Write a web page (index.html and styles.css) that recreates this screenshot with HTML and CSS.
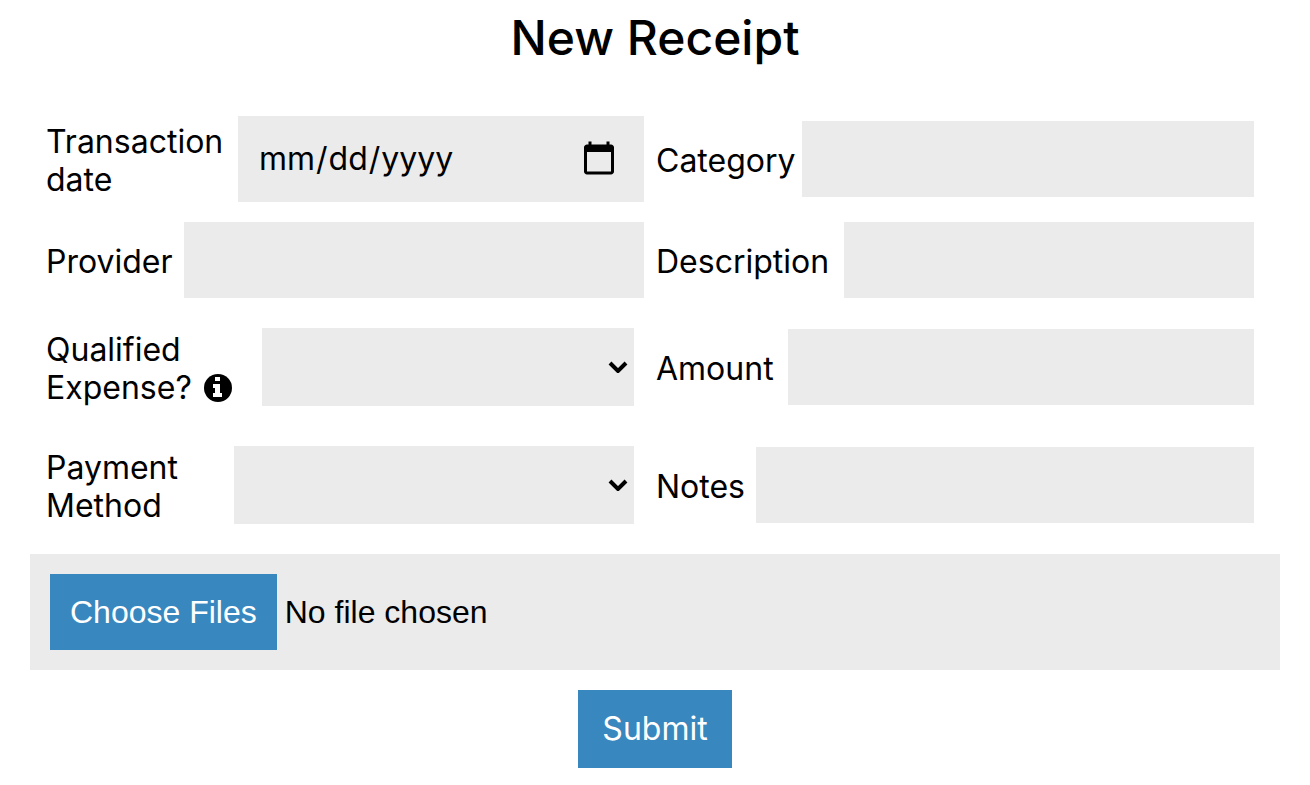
FILE: index.html
```
<!DOCTYPE html>
<html lang="en">
<head>
    <meta charset="UTF-8">
    <meta name="viewport" content="width=device-width, initial-scale=1.0">
    <title>New Receipt</title>
    <link rel="stylesheet" href="styles.css">
</head>
<body>
    <h1>New Receipt</h1>
    <form class="receipt-form">
        <div class="fields">
            <div class="field">
                <label class="label-date" for="date">Transaction date</label>
                <input type="date" id="date" name="date">
            </div>
            <div class="field">
                <label class="label-category" for="category">Category</label>
                <input type="text" id="category" name="category">
            </div>
            <div class="field">
                <label class="label-provider" for="provider">Provider</label>
                <input type="text" id="provider" name="provider">
            </div>
            <div class="field">
                <label class="label-description" for="description">Description</label>
                <input type="text" id="description" name="description">
            </div>
            <div class="field">
                <label class="label-qualified" for="qualified">Qualified Expense?
                    <svg class="info" viewBox="0 0 28 28" aria-hidden="true">
                        <circle cx="14" cy="14" r="14"/>
                        <path fill="#fff" d="M11 3h5v4h-5zM9 10h7v9h2v4H9v-4h2v-5H9z"/>
                    </svg>
                </label>
                <div class="select">
                    <select id="qualified" name="qualified">
                        <option value=""></option>
                        <option value="yes">Yes</option>
                        <option value="no">No</option>
                    </select>
                    <svg class="arrow" viewBox="0 0 20 12" aria-hidden="true"><path d="M2 2l8 8 8-8"/></svg>
                </div>
            </div>
            <div class="field">
                <label class="label-amount" for="amount">Amount</label>
                <input type="text" id="amount" name="amount">
            </div>
            <div class="field">
                <label class="label-payment" for="payment">Payment Method</label>
                <div class="select">
                    <select id="payment" name="payment">
                        <option value=""></option>
                        <option value="cash">Cash</option>
                        <option value="card">Card</option>
                    </select>
                    <svg class="arrow" viewBox="0 0 20 12" aria-hidden="true"><path d="M2 2l8 8 8-8"/></svg>
                </div>
            </div>
            <div class="field">
                <label class="label-notes" for="notes">Notes</label>
                <input type="text" id="notes" name="notes">
            </div>
        </div>
        <input type="file" class="files" name="files" aria-label="Receipt files" multiple>
        <button type="submit">Submit</button>
    </form>
</body>
</html>
```
FILE: styles.css
```
* {
    margin: 0;
    padding: 0;
    box-sizing: border-box;
}
body {
    padding: 10px 30px;
    background: #fff;
    color: #000;
    font-family: Inter, sans-serif;
    font-size: 32px;
    line-height: 38px;
}
h1 {
    margin-bottom: 50px;
    font-size: 48px;
    font-weight: 500;
    line-height: 56px;
    text-align: center;
}
.receipt-form {
    display: flex;
    flex-direction: column;
    align-items: center;
    gap: 20px;
}
.fields {
    display: grid;
    grid-template-columns: 1fr 1fr;
    gap: 20px 12px;
    width: 100%;
    padding: 0 26px 0 16px;
}
.field {
    display: flex;
    align-items: center;
    gap: 10px;
    min-width: 0;
}
label {
    flex: none;
    padding-top: 3px;
}
.label-date {
    width: 182px;
}
.label-category {
    width: 136px;
}
.label-provider {
    width: 128px;
}
.label-description {
    width: 178px;
}
.label-qualified {
    width: 196px;
}
.label-amount {
    width: 122px;
}
.label-payment {
    width: 168px;
}
.label-notes {
    width: 90px;
}
.info {
    width: 28px;
    height: 28px;
    margin-left: 3px;
    vertical-align: -3px;
}
input, select, button {
    border: none;
    border-radius: 0;
    background: #ebebeb;
    color: #000;
    font: inherit;
}
.field input, .select {
    flex: 1;
    min-width: 0;
}
.field input {
    height: 76px;
    padding: 0 20px;
}
.field input[type="date"] {
    height: 86px;
    padding-right: 26px;
}
input::-webkit-calendar-picker-indicator {
    width: 38px;
    height: 38px;
    padding: 0;
    background-size: contain;
}
.select {
    position: relative;
    margin: 10px;
}
select {
    display: block;
    width: 100%;
    height: 78px;
    padding: 0 32px 0 20px;
    appearance: none;
}
.arrow {
    position: absolute;
    top: 33px;
    right: 6px;
    width: 20px;
    height: 12px;
    fill: none;
    stroke: #000;
    stroke-width: 4;
    pointer-events: none;
}
.files {
    width: 100%;
    padding: 20px;
    font-family: "Liberation Sans", Arial, sans-serif;
}
.files::file-selector-button {
    height: 76px;
    margin-right: 8px;
    padding: 0 20px;
    border: none;
    background: #3887bf;
    color: #fff;
    font: inherit;
}
button {
    padding: 20px 24px;
    background: #3887bf;
    color: #fff;
}
```
